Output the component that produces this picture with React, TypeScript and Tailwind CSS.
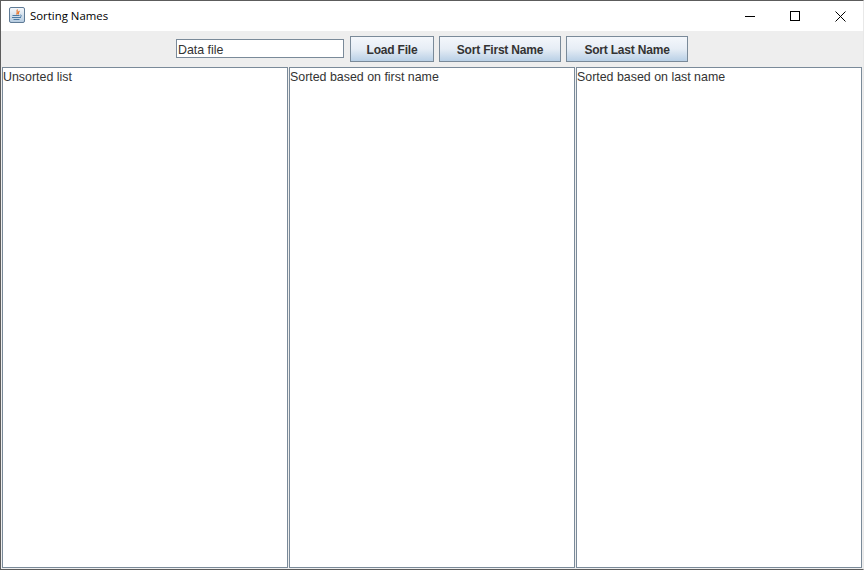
const panels = ["Unsorted list", "Sorted based on first name", "Sorted based on last name"];
const buttons = [
  { label: "Load File", width: "w-[84px]" },
  { label: "Sort First Name", width: "w-[122px]" },
  { label: "Sort Last Name", width: "w-[122px]" },
];

function JavaIcon() {
  return (
    <svg width="16" height="16" viewBox="0 0 16 16" className="shrink-0 -mt-[2px]">
      <defs>
        <linearGradient id="javaBg" x1="0" y1="0" x2="0" y2="1">
          <stop offset="0" stopColor="#f7f9fc" />
          <stop offset="1" stopColor="#b4cadf" />
        </linearGradient>
      </defs>
      <rect x="0.5" y="0.5" width="15" height="15" rx="1.5" fill="url(#javaBg)" stroke="#5f7b96" />
      <path d="M8.5 2.5C7 4.5 9.5 5 7.5 7.5M10.5 4C8.8 5 10 6 9 7.5" fill="none" stroke="#e8762d" strokeWidth="1.2" />
      <path d="M3.5 8.5h7M3 10.5h9M4.5 12.5h6" stroke="#4a7aa5" strokeWidth="1" />
      <path d="M11 8c2 0 2 1.5 0 2" fill="none" stroke="#4a7aa5" strokeWidth="0.8" />
    </svg>
  );
}

export default function App() {
  return (
    <div className="w-[864px] h-[570px] flex flex-col bg-white border border-[#5c5c5c] border-r-[#e8e8e8] overflow-hidden font-['Liberation_Sans',Arial,sans-serif] text-[12.4px] text-[#333333]">
      {/* Title bar */}
      <div className="h-[30px] shrink-0 flex items-center bg-white pl-[8px]">
        <JavaIcon />
        <span className="ml-[5px] font-['Open_Sans',sans-serif] text-[11.4px] text-black">Sorting Names</span>
        <div className="ml-auto flex items-center">
          <div className="w-[45px] h-[30px] flex items-center justify-center pr-[2px]">
            <div className="w-[10px] h-px bg-black" />
          </div>
          <div className="w-[45px] h-[30px] flex items-center justify-center pr-[2px]">
            <div className="w-[10px] h-[10px] border border-black" />
          </div>
          <div className="w-[45px] h-[30px] flex items-center justify-center">
            <svg width="11" height="11" viewBox="0 0 11 11">
              <path d="M0.5 0.5l10 10M10.5 0.5l-10 10" stroke="#000" strokeWidth="1" fill="none" />
            </svg>
          </div>
        </div>
      </div>

      {/* Toolbar */}
      <div className="h-[36px] shrink-0 bg-[#eeeeee] flex items-center pl-[175px] gap-[5px]">
        <div className="w-[168px] h-[19px] -mt-px mr-px bg-white border border-[#7a8a99] pl-[1px] pt-px leading-[18px]">Data file</div>
        {buttons.map((b) => (
          <div
            key={b.label}
            className={`${b.width} h-[26px] pt-px flex items-center justify-center border border-[#7a8a99] bg-gradient-to-b from-[#f4f7fb] via-[#e6edf5] to-[#b9d0e6] font-bold text-[12px] tracking-[-0.2px]`}
          >
            {b.label}
          </div>
        ))}
      </div>

      {/* Lists */}
      <div className="flex-1 min-h-0 bg-[#eeeeee] pl-px pb-px flex gap-px">
        {panels.map((p) => (
          <div key={p} className="w-[286px] h-full bg-white border border-[#7a8a99] leading-[16px] pt-px">
            {p}
          </div>
        ))}
      </div>
    </div>
  );
}
